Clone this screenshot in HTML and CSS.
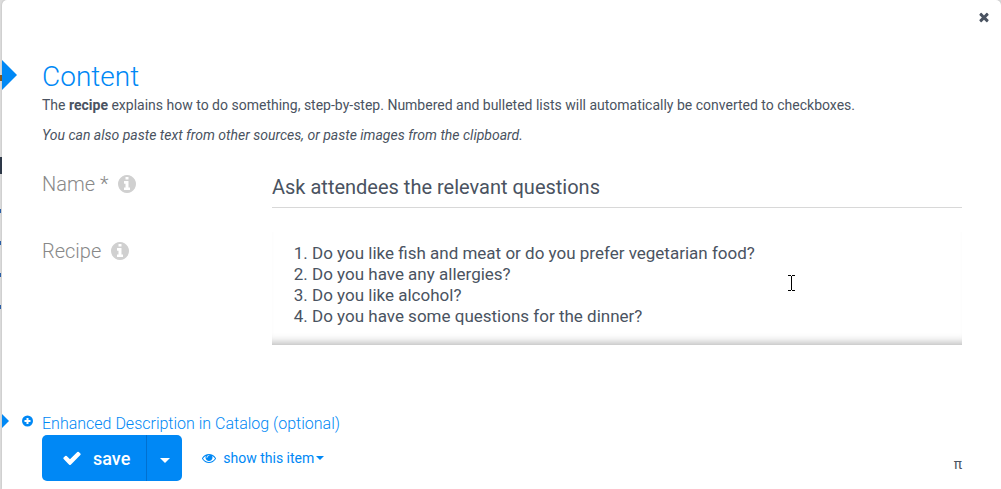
FILE: index.html
```
<!DOCTYPE html>
<html lang="en">
<head>
  <meta charset="UTF-8">
  <meta name="viewport" content="width=device-width, initial-scale=1.0">
  <title>Recipe</title>
  <link rel="stylesheet" href="styles.css">
</head>
<body>

  <!-- page behind the dialog -->
  <div class="backdrop"></div>

  <form class="dialog">
    <div class="dialog-top">
      <button type="button" class="close" aria-label="Close">
        <svg viewBox="0 0 1792 1792" width="14" height="14"><path d="M1490 1322q0 40-28 68l-136 136q-28 28-68 28t-68-28l-294-294-294 294q-28 28-68 28t-68-28l-136-136q-28-28-28-68t28-68l294-294-294-294q-28-28-28-68t28-68l136-136q28-28 68-28t68 28l294 294 294-294q28-28 68-28t68 28l136 136q28 28 28 68t-28 68l-294 294 294 294q28 28 28 68z"/></svg>
      </button>
    </div>

    <div class="section-title">
      <svg class="arrow" viewBox="0 0 15 30" width="15" height="30"><path d="M0 0l15 15L0 30z"/></svg>
      <h1>Content</h1>
    </div>

    <div class="section-body">
      <p class="intro">The <b>recipe</b> explains how to do something, step-by-step. Numbered and bulleted lists will automatically be converted to checkboxes.</p>
      <p class="intro"><i>You can also paste text from other sources, or paste images from the clipboard.</i></p>

      <div class="field">
        <label for="name">Name *
          <svg class="info" viewBox="128 128 1536 1536" width="18" height="18"><path d="M1152 1376v-160q0-14-9-23t-23-9h-96v-512q0-14-9-23t-23-9h-320q-14 0-23 9t-9 23v160q0 14 9 23t23 9h96v320h-96q-14 0-23 9t-9 23v160q0 14 9 23t23 9h448q14 0 23-9t9-23zm-128-896v-160q0-14-9-23t-23-9h-192q-14 0-23 9t-9 23v160q0 14 9 23t23 9h192q14 0 23-9t9-23zm640 416q0 209-103 385.5t-279.5 279.5-385.5 103-385.5-103-279.5-279.5-103-385.5 103-385.5 279.5-279.5 385.5-103 385.5 103 279.5 279.5 103 385.5z"/></svg>
        </label>
        <input type="text" id="name" value="Ask attendees the relevant questions">
      </div>

      <div class="field recipe">
        <span class="label" id="recipe-label">Recipe
          <svg class="info" viewBox="128 128 1536 1536" width="18" height="18"><path d="M1152 1376v-160q0-14-9-23t-23-9h-96v-512q0-14-9-23t-23-9h-320q-14 0-23 9t-9 23v160q0 14 9 23t23 9h96v320h-96q-14 0-23 9t-9 23v160q0 14 9 23t23 9h448q14 0 23-9t9-23zm-128-896v-160q0-14-9-23t-23-9h-192q-14 0-23 9t-9 23v160q0 14 9 23t23 9h192q14 0 23-9t9-23zm640 416q0 209-103 385.5t-279.5 279.5-385.5 103-385.5-103-279.5-279.5-103-385.5 103-385.5 279.5-279.5 385.5-103 385.5 103 279.5 279.5 103 385.5z"/></svg>
        </span>
        <div class="editor" contenteditable="true" role="textbox" aria-multiline="true" aria-labelledby="recipe-label" spellcheck="false">
          <ol>
            <li>Do you like fish and meat or do you prefer vegetarian food?</li>
            <li>Do you have any allergies?</li>
            <li>Do you like alcohol?</li>
            <li>Do you have some questions for the dinner?</li>
          </ol>
        </div>
      </div>
    </div>

    <div class="section-title optional">
      <svg class="arrow" viewBox="0 0 7 14" width="7" height="14"><path d="M0 0l7 7-7 7z"/></svg>
      <svg class="plus" viewBox="0 0 11 11" width="11" height="14"><circle cx="5.5" cy="5.5" r="5.5"/><path d="M5.5 2.5v6M2.5 5.5h6"/></svg>
      <a href="#">Enhanced Description in Catalog (optional)</a>
    </div>

    <div class="actions">
      <div class="btn-group">
        <button type="submit" class="save">
          <svg viewBox="0 0 1792 1792" width="20" height="20"><path d="M1671 566q0 40-28 68l-724 724-136 136q-28 28-68 28t-68-28l-136-136-362-362q-28-28-28-68t28-68l136-136q28-28 68-28t68 28l294 295 656-657q28-28 68-28t68 28l136 136q28 28 28 68z"/></svg>
          save
        </button>
        <button type="button" class="toggle" aria-label="More save options"><span class="caret"></span></button>
      </div>
      <button type="button" class="show">
        <svg viewBox="0 0 1792 1792" width="14" height="14"><path d="M1664 960q-152-236-381-353 61 104 61 225 0 185-131.5 316.5t-316.5 131.5-316.5-131.5-131.5-316.5q0-121 61-225-229 117-381 353 133 205 333.5 326.5t434.5 121.5 434.5-121.5 333.5-326.5zm-720-384q0-20-14-34t-34-14q-125 0-214.5 89.5t-89.5 214.5q0 20 14 34t34 14 34-14 14-34q0-86 61-147t147-61q20 0 34-14t14-34zm848 384q0 34-20 69-140 230-376.5 368.5t-499.5 138.5-499.5-139-376.5-368q-20-35-20-69t20-69q140-229 376.5-368t499.5-139 499.5 139 376.5 368q20 35 20 69z"/></svg>
        <span>show this item</span><span class="caret"></span>
      </button>
      <span class="pi">π</span>
    </div>
  </form>

  <!-- text cursor over the editor -->
  <svg class="cursor" viewBox="0 0 7 16" width="7" height="16"><path d="M0 .5h3M4 .5h3M3.5 1v14M0 15.5h3M4 15.5h3"/></svg>

</body>
</html>
```
FILE: styles.css
```
* {
  box-sizing: border-box;
}

body {
  margin: 0;
  min-height: 100vh;
  display: flex;
  background-color: #dcdcdc;
  color: #4a5361;
  font-family: Roboto, sans-serif;
  font-size: 14px;
  line-height: 20px;
}

button, input {
  font-family: inherit;
  color: inherit;
}

svg {
  display: block;
  flex: none;
  fill: currentColor;
}

p, h1, ol {
  margin: 0;
}

.backdrop {
  width: 2px;
  flex: none;
  background-image:
    linear-gradient(#8a5a20, #8a5a20),
    linear-gradient(#2f3a4a, #2f3a4a),
    linear-gradient(#2a5fa8, #2a5fa8),
    linear-gradient(#2a5fa8, #2a5fa8),
    linear-gradient(#2a5fa8, #2a5fa8),
    linear-gradient(#2a5fa8, #2a5fa8);
  background-repeat: no-repeat;
  background-size: 2px 6px, 2px 17px, 1px 4px, 1px 4px, 1px 4px, 1px 4px;
  background-position: 0 75px, 0 157px, 0 209px, 0 241px, 0 273px, 0 305px;
}

.dialog {
  flex: 1;
  min-width: 0;
  background-color: #fff;
  border-radius: 5px 5px 0 0;
  box-shadow: 0 0 2px rgba(0, 0, 0, 0.2);
}

.dialog-top {
  display: flex;
  justify-content: flex-end;
  padding: 10px 10px 0;
  height: 60px;
}

.close {
  width: 14px;
  height: 14px;
  padding: 0;
  border: none;
  background: none;
  cursor: pointer;
}

.section-title {
  display: grid;
  grid-template-columns: 40px 1fr;
  align-items: start;
  color: #0088f5;
}

h1 {
  margin-bottom: 2px;
  font-size: 28px;
  font-weight: 300;
  line-height: 33px;
}

.section-body {
  padding: 0 39px 0 40px;
}

.intro {
  margin-bottom: 10px;
}

.field {
  display: grid;
  grid-template-columns: 230px 1fr;
  margin-top: 20px;
}

.recipe {
  margin-top: 24px;
}

.field label, .field .label {
  display: flex;
  gap: 10px;
  height: 38px;
  align-items: center;
  color: #888;
  font-size: 20px;
  font-weight: 300;
}

.info {
  color: #d0d0d0;
}

.field input {
  width: 100%;
  height: 43px;
  padding: 2px 0 0;
  border: none;
  border-bottom: 1px solid #d8d8d8;
  outline: none;
  background: none;
  font-size: 20px;
}

.editor {
  padding: 11px 0 18px;
  outline: none;
  font-size: 17px;
  line-height: 21px;
  box-shadow: inset 0 -10px 10px -8px rgba(0, 0, 0, 0.3);
}

.editor ol {
  padding-left: 40px;
}

.optional {
  grid-template-columns: 20px 20px 1fr;
  margin: 69px 0 1px;
  font-size: 16px;
  font-weight: 300;
}

.optional a {
  color: inherit;
  text-decoration: none;
}

.plus path {
  fill: none;
  stroke: #fff;
  stroke-width: 2;
}

.actions {
  display: flex;
  align-items: center;
  padding: 0 39px 8px 40px;
}

.btn-group {
  display: flex;
  height: 46px;
  margin-right: 20px;
  border-radius: 5px;
  overflow: hidden;
  background-color: #0088f5;
  color: #fff;
}

.btn-group button {
  border: none;
  background: none;
  cursor: pointer;
}

.save {
  display: flex;
  align-items: center;
  gap: 11px;
  padding: 0 16px 0 20px;
  font-size: 18px;
  font-weight: 500;
}

.toggle {
  width: 36px;
  padding: 4px 0 0;
  display: flex;
  align-items: center;
  justify-content: center;
}

.btn-group .toggle {
  border-left: 1px solid #0070d0;
}

.caret {
  border: 4px solid transparent;
  border-top-color: currentColor;
  border-bottom: none;
}

.toggle .caret {
  border-width: 5px 5px 0;
}

.show {
  display: flex;
  align-items: center;
  padding: 0;
  border: none;
  background: none;
  color: #0088f5;
  font-size: 14px;
  cursor: pointer;
}

.show svg {
  margin-right: 7px;
}

.show .caret {
  margin-left: 2px;
}

.pi {
  margin-left: auto;
  padding-top: 12px;
}

.cursor {
  position: absolute;
  top: 275px;
  left: 788px;
  fill: none;
  stroke: #000;
}
```
